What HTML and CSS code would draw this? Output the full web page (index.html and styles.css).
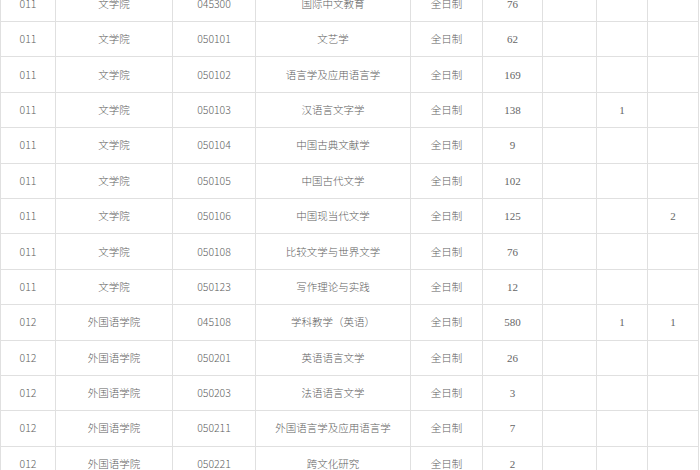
FILE: index.html
```html
<!DOCTYPE html>
<html lang="zh-CN">
<head>
<meta charset="utf-8">
<link rel="stylesheet" href="styles.css">
</head>
<body>
<table class="plan">
  <colgroup>
    <col class="c1"><col class="c2"><col class="c3"><col class="c4"><col class="c5"><col class="c6"><col class="c7"><col class="c8"><col class="c9">
  </colgroup>
  <tbody>
    <tr><td>011</td><td>文学院</td><td>045300</td><td>国际中文教育</td><td>全日制</td><td class="num">76</td><td></td><td></td><td></td></tr>
    <tr><td>011</td><td>文学院</td><td>050101</td><td>文艺学</td><td>全日制</td><td class="num">62</td><td></td><td></td><td></td></tr>
    <tr><td>011</td><td>文学院</td><td>050102</td><td>语言学及应用语言学</td><td>全日制</td><td class="num">169</td><td></td><td></td><td></td></tr>
    <tr><td>011</td><td>文学院</td><td>050103</td><td>汉语言文字学</td><td>全日制</td><td class="num">138</td><td></td><td class="num">1</td><td></td></tr>
    <tr><td>011</td><td>文学院</td><td>050104</td><td>中国古典文献学</td><td>全日制</td><td class="num">9</td><td></td><td></td><td></td></tr>
    <tr><td>011</td><td>文学院</td><td>050105</td><td>中国古代文学</td><td>全日制</td><td class="num">102</td><td></td><td></td><td></td></tr>
    <tr><td>011</td><td>文学院</td><td>050106</td><td>中国现当代文学</td><td>全日制</td><td class="num">125</td><td></td><td></td><td class="num">2</td></tr>
    <tr><td>011</td><td>文学院</td><td>050108</td><td>比较文学与世界文学</td><td>全日制</td><td class="num">76</td><td></td><td></td><td></td></tr>
    <tr><td>011</td><td>文学院</td><td>050123</td><td>写作理论与实践</td><td>全日制</td><td class="num">12</td><td></td><td></td><td></td></tr>
    <tr><td>012</td><td>外国语学院</td><td>045108</td><td>学科教学（英语）</td><td>全日制</td><td class="num">580</td><td></td><td class="num">1</td><td class="num">1</td></tr>
    <tr><td>012</td><td>外国语学院</td><td>050201</td><td>英语语言文学</td><td>全日制</td><td class="num">26</td><td></td><td></td><td></td></tr>
    <tr><td>012</td><td>外国语学院</td><td>050203</td><td>法语语言文学</td><td>全日制</td><td class="num">3</td><td></td><td></td><td></td></tr>
    <tr><td>012</td><td>外国语学院</td><td>050211</td><td>外国语言学及应用语言学</td><td>全日制</td><td class="num">7</td><td></td><td></td><td></td></tr>
    <tr><td>012</td><td>外国语学院</td><td>050221</td><td>跨文化研究</td><td>全日制</td><td class="num">2</td><td></td><td></td><td></td></tr>
  </tbody>
</table>
</body>
</html>
```
FILE: styles.css
```css
html, body {
  margin: 0;
  padding: 0;
  background: #ffffff;
  overflow: hidden;
}

.plan {
  width: 698px;
  margin-top: -14.4px;
  border-collapse: collapse;
  table-layout: fixed;
  font-family: "Noto Sans CJK SC", "Noto Sans", sans-serif;
  font-weight: 300;
  font-size: 10.5px;
  color: #5e5e5e;
}

.c1 { width: 55px; }
.c2 { width: 117px; }
.c3 { width: 83px; }
.c4 { width: 155px; }
.c5 { width: 72px; }
.c6 { width: 60px; }
.c7 { width: 54px; }
.c8 { width: 51px; }
.c9 { width: 51px; }

.plan tr {
  height: 35.4px;
}

.plan td {
  border: 1px solid #e0e0e0;
  text-align: center;
  vertical-align: middle;
  padding: 0;
  line-height: 14px;
  white-space: nowrap;
}

.plan td.num {
  font-family: "Liberation Serif", "Noto Sans CJK SC", serif;
  font-weight: 400;
  font-size: 11px;
  color: #666666;
}
```
